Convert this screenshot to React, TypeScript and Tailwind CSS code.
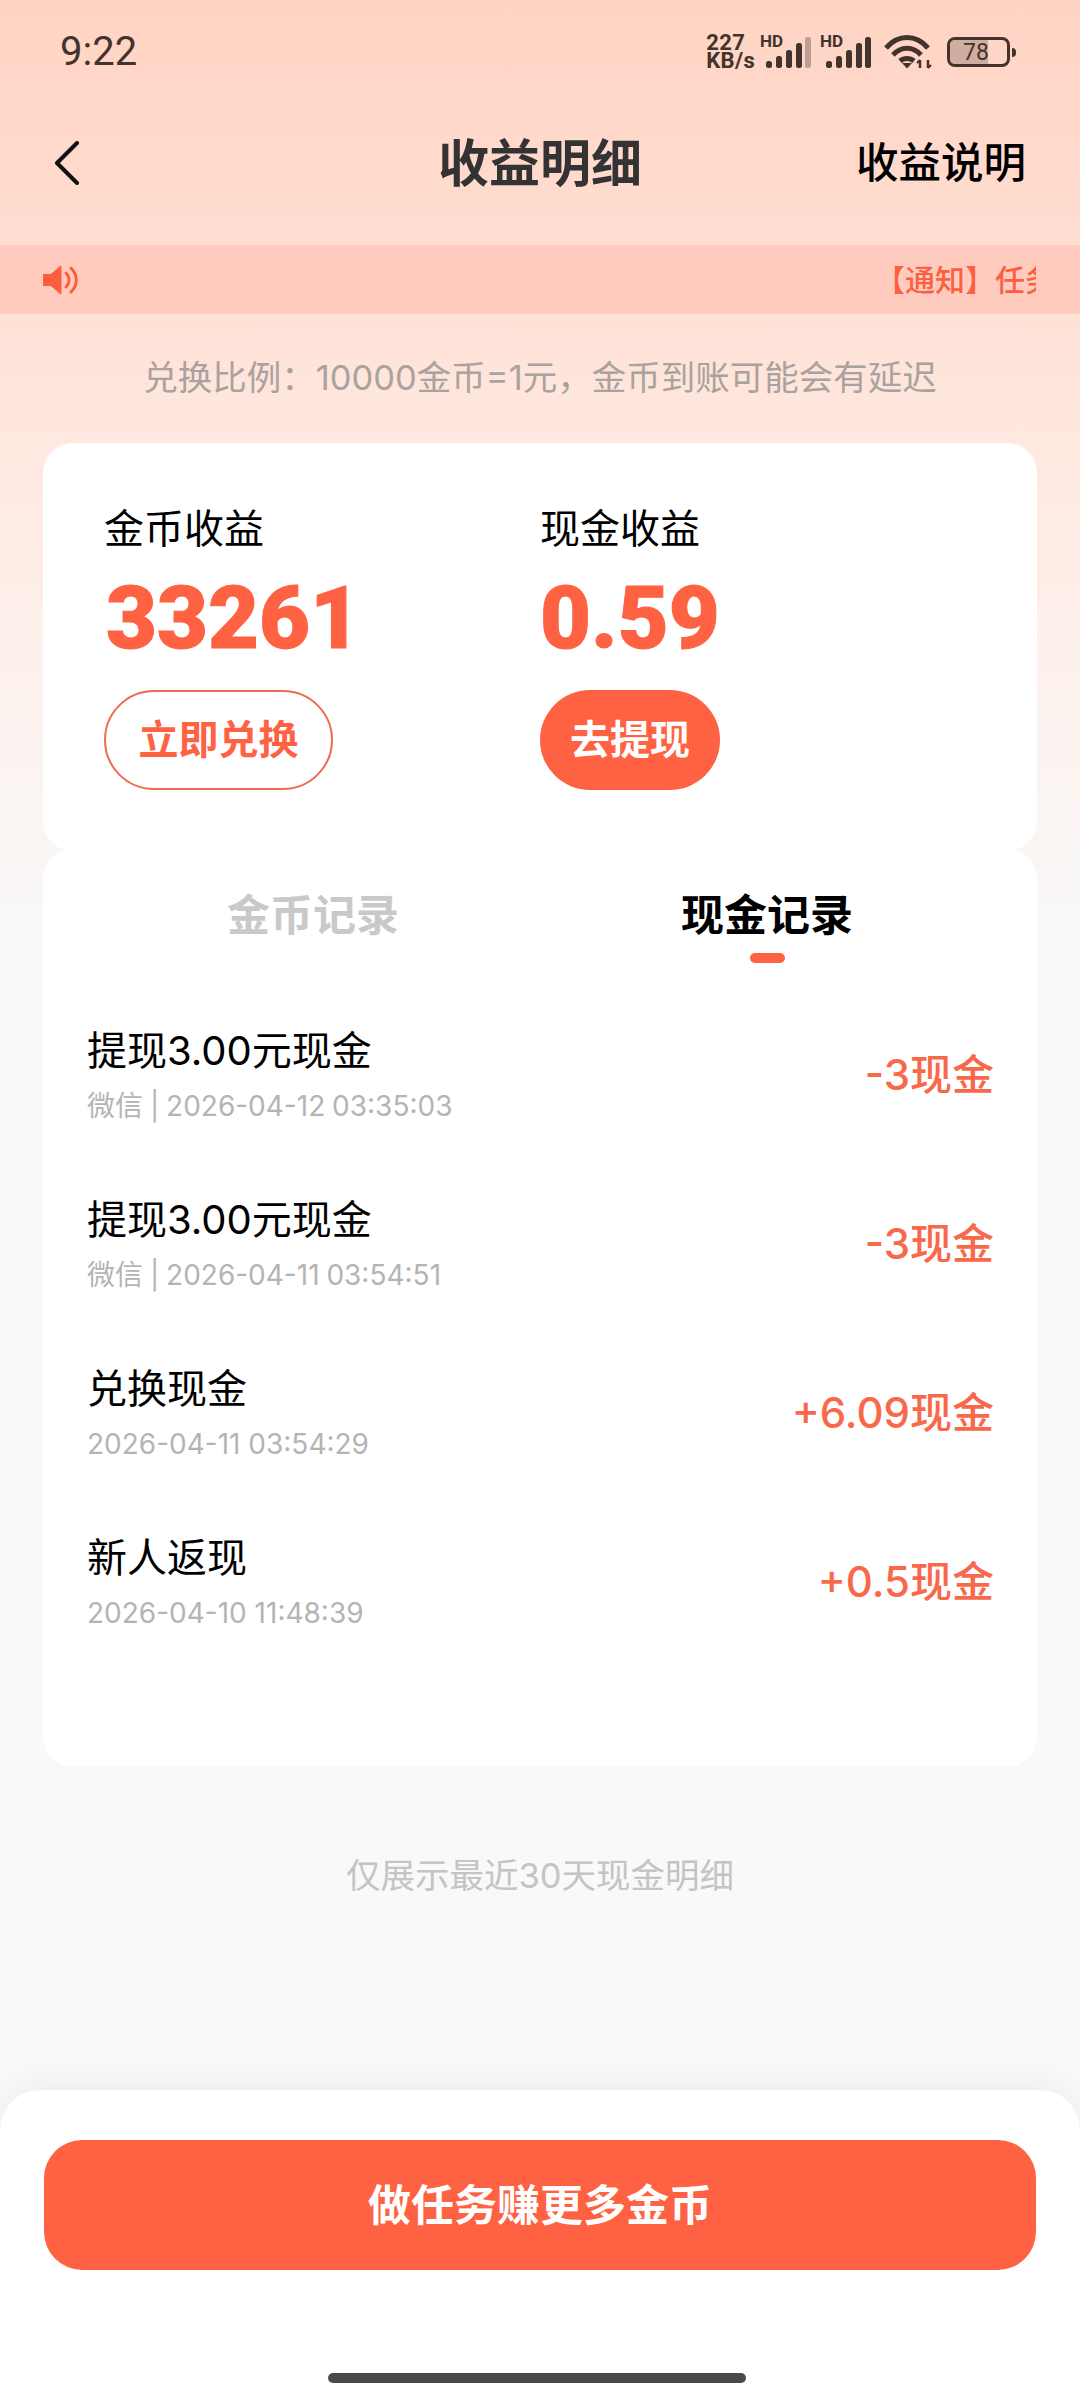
const records = [
  { title: '提现3.00元现金', sub: '微信 | 2026-04-12 03:35:03', amount: '-3现金' },
  { title: '提现3.00元现金', sub: '微信 | 2026-04-11 03:54:51', amount: '-3现金' },
  { title: '兑换现金', sub: '2026-04-11 03:54:29', amount: '+6.09现金' },
  { title: '新人返现', sub: '2026-04-10 11:48:39', amount: '+0.5现金' },
]

const Signal = ({ dim }: { dim?: boolean }) => (
  <div className="relative h-[33px] w-[48px]">
    <span className="absolute left-[-3px] top-[-2px] font-['Roboto',sans-serif] text-[17px] font-bold leading-[14px] text-[#43332d]">HD</span>
    <svg width="48" height="33" viewBox="0 0 48 33" className="block">
      <rect x="3" y="25" width="6" height="7" rx="2.5" fill="#43332d" />
      <rect x="13" y="20" width="6" height="12" rx="2.5" fill="#43332d" />
      <rect x="23" y="14" width="6" height="18" rx="2.5" fill="#43332d" />
      <rect x="33" y="7" width="6" height="25" rx="2.5" fill="#43332d" />
      <rect x="42" y="1" width="6" height="31" rx="2.5" fill={dim ? '#bba094' : '#43332d'} />
    </svg>
  </div>
)

const StatusBar = () => (
  <div className="flex h-[104px] items-center justify-between pl-[60px] pr-[64px] text-[#43332d]">
    <span className="font-['Roboto',sans-serif] text-[40px] leading-none">9:22</span>
    <div className="flex items-center">
      <div className="mr-[8px] font-['Roboto',sans-serif] text-[22px] font-bold leading-[18px] tracking-[0.3px]">
        227
        <br />
        KB/s
      </div>
      <Signal dim />
      <div className="w-[12px]" />
      <Signal />
      <svg width="48" height="34" viewBox="0 0 48 34" className="ml-[13px] block" fill="none" stroke="#43332d" strokeWidth="5">
        <path d="M2 13 C14 -1 32 -1 44 13" />
        <path d="M9 20 C17 11 29 11 37 20" />
        <path d="M16 26 C20 22.5 26 22.5 30 26" />
        <path d="M18 28 L23 33.5 L28 28 Z" fill="#43332d" stroke="none" />
        <path d="M36 25 V33 M44 25 V33" strokeWidth="2.5" />
        <path d="M33 28 L36 25 M47 30 L44 33" strokeWidth="2" />
      </svg>
      <div className="relative ml-[15px] h-[30px] w-[63px] overflow-hidden rounded-[8px] border-[3px] border-[#43332d]">
        <div className="h-full w-[38px] bg-[#cfae9f]" />
        <span className="absolute inset-0 flex items-center justify-center pr-[5px] font-['Roboto',sans-serif] text-[23px] leading-none">78</span>
      </div>
      <div className="ml-[2px] h-[9px] w-[4px] rounded-r-full bg-[#43332d]" />
    </div>
  </div>
)

const NavBar = () => (
  <div className="grid h-[118px] grid-cols-[1fr_auto_1fr] items-center px-[54px]">
    <svg width="26" height="44" viewBox="0 0 26 44" fill="none" stroke="#111" strokeWidth="4" strokeLinecap="round" strokeLinejoin="round" className="block">
      <path d="M23 2 L3 22 L23 42" />
    </svg>
    <h1 className="text-[51px] font-bold leading-none text-[#333]">收益明细</h1>
    <span className="justify-self-end text-[42.5px] font-medium leading-none text-black">收益说明</span>
  </div>
)

const NoticeBar = () => (
  <div className="mt-[23px] flex h-[69px] items-center bg-[#ffcbbf] pl-[43px] pr-[44px]">
    <svg width="36" height="30" viewBox="0 0 36 30" fill="none" className="block shrink-0">
      <path d="M0 9 H8 L17 1 Q18.5 0 18.5 2 V28 Q18.5 30 17 29 L8 21 H0 Z" fill="#fb5f3e" />
      <path d="M23 8 C27 12 27 18 23 22" stroke="#fb5f3e" strokeWidth="3" strokeLinecap="round" />
      <path d="M28 3 C35 10 35 20 28 27" stroke="#fb5f3e" strokeWidth="3" strokeLinecap="round" />
    </svg>
    <div className="ml-[796px] min-w-0 flex-1 overflow-hidden whitespace-nowrap text-[30px] font-medium leading-none text-[#fb6140]">
      【通知】任务奖励
    </div>
  </div>
)

const Earnings = () => (
  <div className="mx-[43px] flex h-[408px] rounded-[30px] bg-white pl-[61px] pt-[58px]">
    <div className="w-[436px]">
      <div className="text-[40px] leading-[56px] text-black">金币收益</div>
      <div className="ml-[2px] mt-[11px] font-['Roboto',sans-serif] text-[88px] font-black leading-[100px] text-[#ff6242] [-webkit-text-stroke:1px_#ff6242]">33261</div>
      <button className="mt-[22px] flex h-[100px] w-[229px] items-center justify-center rounded-full border-2 border-[#ee6b4f] text-[40px] font-bold text-[#ff6242]">
        立即兑换
      </button>
    </div>
    <div>
      <div className="text-[40px] leading-[56px] text-black">现金收益</div>
      <div className="mt-[11px] font-['Roboto',sans-serif] text-[88px] font-black leading-[100px] text-[#ff6242] [-webkit-text-stroke:1px_#ff6242]">0.59</div>
      <button className="mt-[22px] flex h-[100px] w-[180px] items-center justify-center rounded-full bg-[#ff6242] text-[40px] font-bold text-white">
        去提现
      </button>
    </div>
  </div>
)

const Records = () => (
  <div className="relative mx-[43px] -mt-[2px] h-[918px] rounded-[30px] bg-white pt-[36px]">
    <div className="flex justify-center">
      <div className="w-[454px] text-center text-[43px] font-bold leading-[60px] text-[#c9c9c9]">金币记录</div>
      <div className="flex w-[454px] flex-col items-center">
        <div className="text-[43px] font-bold leading-[60px] text-black">现金记录</div>
        <div className="mt-[8px] h-[10px] w-[35px] rounded-full bg-[#ff6242]" />
      </div>
    </div>
    <div className="mt-[27px]">
      {records.map((r, i) => (
        <div key={i} className="flex h-[169px] items-center justify-between pl-[44px] pr-[43px]">
          <div>
            <div className="text-[40px] leading-[56px] text-black">{r.title}</div>
            <div className={r.sub.includes('|') ? 'mt-[7px] text-[28px] leading-[40px] text-[#b4b4b4] [word-spacing:-1px]' : 'mt-[7px] text-[28px] leading-[40px] text-[#b4b4b4]'}>{r.sub}</div>
          </div>
          <div className="text-[42px] font-medium leading-none text-[#f8694c]">{r.amount}</div>
        </div>
      ))}
    </div>
  </div>
)

const BottomSheet = () => (
  <div className="mt-auto h-[310px] rounded-t-[40px] bg-white px-[44px] pt-[50px] shadow-[0_-8px_30px_rgba(0,0,0,0.05)]">
    <button className="flex h-[130px] w-full items-center justify-center rounded-[38px] bg-[#ff6242] text-[43px] font-bold text-white">
      做任务赚更多金币
    </button>
    <div className="ml-[284px] mt-[103px] h-[10px] w-[418px] rounded-full bg-[#4a4a4a]" />
  </div>
)

const App = () => {
  return (
    <div className="flex h-[2400px] w-[1080px] flex-col overflow-hidden bg-[linear-gradient(180deg,#ffd3c3_0px,#ffddd0_240px,#ffe8e0_440px,#fcf2ee_700px,#f9f9f9_950px)] font-['Inter','Noto_Sans_CJK_SC',sans-serif]">
      <StatusBar />
      <NavBar />
      <NoticeBar />
      <div className="flex h-[129px] items-center justify-center text-[34.5px] leading-none text-[#aaa29e]">
        兑换比例：10000金币=1元，金币到账可能会有延迟
      </div>
      <Earnings />
      <Records />
      <div className="mt-[84px] text-center text-[34.5px] leading-[50px] text-[#c4c4c4]">仅展示最近30天现金明细</div>
      <BottomSheet />
    </div>
  )
}

export default App
